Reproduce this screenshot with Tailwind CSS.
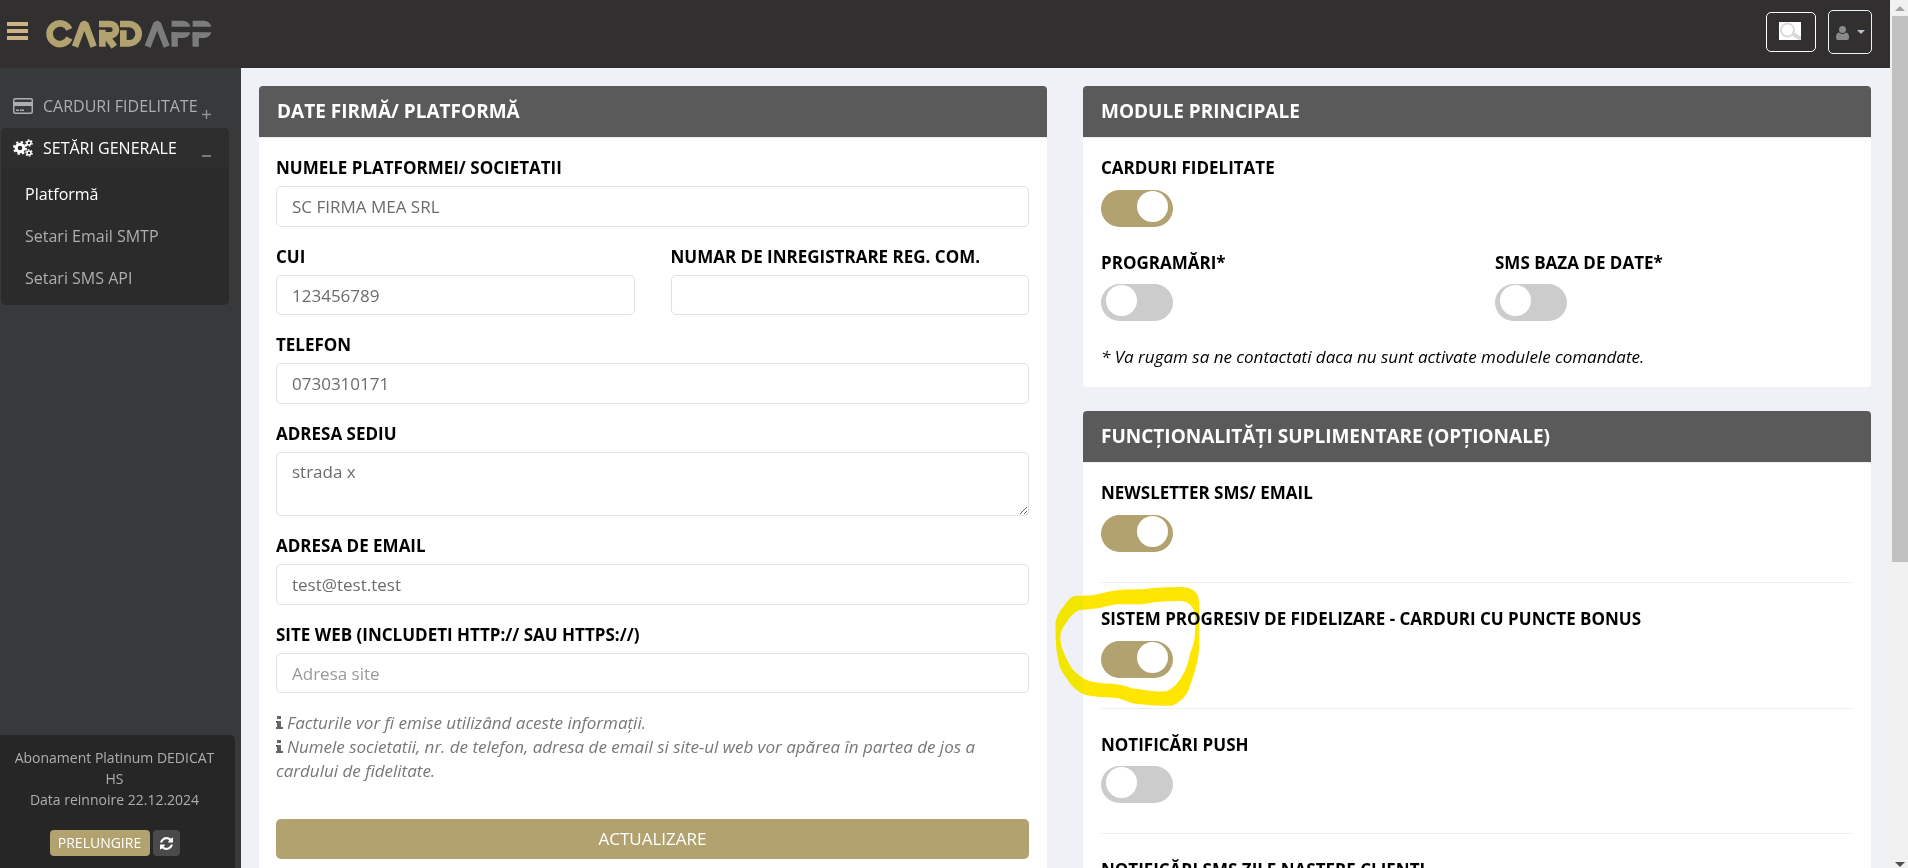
<!DOCTYPE html>
<html lang="ro">
<head>
<meta charset="utf-8">
<title>CardApp - Platformă</title>
<script src="https://cdn.jsdelivr.net/npm/@tailwindcss/browser@4"></script>
</head>
<body class="flex h-screen overflow-hidden bg-[#f0f1f7] font-['Open_Sans','Noto_Sans',sans-serif] text-base leading-6 text-black">
<div class="flex min-w-0 flex-1 flex-col">
  <header class="flex h-[68px] shrink-0 items-center bg-[#322f30] pr-[18px]">
    <button aria-label="Meniu" class="mb-[6px] ml-[7px] flex w-[21px] flex-col gap-[3px]">
      <span class="h-1 bg-[#cfb284]"></span><span class="h-1 bg-[#cfb284]"></span><span class="h-1 bg-[#cfb284]"></span>
    </button>
    <a href="#" aria-label="CardApp" class="ml-[17px]">
      <svg class="h-8 w-[168px]" viewBox="135 55 504 96" fill="none" stroke-width="20">
        <g stroke="#b1a26f">
          <path d="M208 89A31 31 0 1 0 208 115"/>
          <path d="M225 141L250 73H256L281 141" stroke-linejoin="bevel"/>
          <path d="M297 73H331A15 15 0 0 1 331 107H318L343 141M307 90V141"/>
          <path d="M360 73H387A29 29 0 0 1 387 131H370V92"/>
        </g>
        <g stroke="#7c7c7c" stroke-width="19">
          <path d="M443 141L469 73H474L500 141" stroke-linejoin="bevel"/>
          <path d="M524 141V98M587 141V98"/>
        </g>
        <g fill="#7c7c7c">
          <path d="M515 63H549Q567 64 571 81H515ZM578 63H612Q630 64 634 81H578Z"/>
          <path d="M515 98H571Q567 114 549 115H515ZM578 98H634Q630 114 612 115H578Z"/>
        </g>
      </svg>
    </a>
    <button aria-label="Caută" class="mb-1 ml-auto flex h-10 w-[50px] items-center justify-center rounded-[5px] border border-white">
      <svg class="mr-[2px] mb-[2px] h-[18px] w-[22px] bg-white" viewBox="0 0 22 18" fill="none" stroke="#d9d9d9"><circle cx="8.500" cy="8" r="6.500" stroke-width="2"/><path d="M14 12L22 17" stroke-width="4"/></svg>
    </button>
    <button aria-label="Cont" class="mb-1 ml-3 flex h-11 w-11 items-center justify-center gap-2 rounded-[5px] border border-[#eef0f7]">
      <svg class="mt-[2px] h-[14px] w-[13px]" viewBox="0 0 13 14" fill="#8a8a8a"><circle cx="6.500" cy="3.500" r="3.500"/><path d="M3 6.500Q6.500 9.500 10 6.500Q13 7 13 11.500Q13 14 11 14H2Q0 14 0 11.500Q0 7 3 6.500Z"/></svg>
      <svg class="h-1 w-2" viewBox="0 0 8 4" fill="#b9bdc9"><path d="M0 0H8L4 4Z"/></svg>
    </button>
  </header>

  <div class="flex min-h-0 flex-1">
    <aside class="flex w-[241px] shrink-0 flex-col justify-between bg-[#38393a] text-[#acaeb0]">
      <nav class="pl-px pr-3 pt-[18px]">
        <a href="#" class="mb-[2px] flex h-10 items-center pl-3 pr-[18px]">
          <svg class="h-4 w-5" viewBox="0 0 20 16" fill="#acaeb0"><rect x=".75" y=".75" width="18.500" height="14.500" rx="1.500" fill="none" stroke="#acaeb0" stroke-width="1.500"/><path d="M1 4H19V8H1ZM3 11.500H6V13H3ZM7 11.500H11V13H7Z"/></svg>
          <span class="ml-[10px]">CARDURI FIDELITATE</span>
          <svg class="ml-auto mt-4 size-[9px]" viewBox="0 0 9 9" stroke="#8f9192" stroke-width="1.500"><path d="M0 4.500H9M4.500 0V9"/></svg>
        </a>
        <div class="overflow-hidden rounded-[5px] bg-[#2b2b2b]">
          <a href="#" class="flex h-[39px] items-center bg-[#2e2e2e] pl-3 pr-[18px] text-white">
            <svg class="h-[18px] w-5" viewBox="0 0 20 18" fill="none" stroke="#fff">
              <circle cx="7" cy="9" r="3.800" stroke-width="3"/><circle cx="7" cy="9" r="6" stroke-width="2" stroke-dasharray="2.350 2.360"/>
              <circle cx="16" cy="4" r="2" stroke-width="1.600"/><circle cx="16" cy="4" r="3.200" stroke-width="1.200" stroke-dasharray="1.670 1.680"/>
              <circle cx="16" cy="14" r="2" stroke-width="1.600"/><circle cx="16" cy="14" r="3.200" stroke-width="1.200" stroke-dasharray="1.670 1.680"/>
            </svg>
            <span class="ml-[10px]">SETĂRI GENERALE</span>
            <span class="ml-auto mt-4 h-[2px] w-[9px] bg-[#7b7b7b]"></span>
          </a>
          <ul class="flex flex-col gap-[18px] px-6 pb-[15px] pt-[15px]">
            <li><a href="#" class="text-white">Platformă</a></li>
            <li><a href="#">Setari Email SMTP</a></li>
            <li><a href="#">Setari SMS API</a></li>
          </ul>
        </div>
      </nav>
      <section class="mr-[6px] rounded-tr-[5px] bg-[#262626] pt-3 pr-4 pb-3 pl-[10px] text-center text-sm leading-[21px]">
        <p>Abonament Platinum DEDICAT HS<br>Data reinnoire 22.12.2024</p>
        <div class="mt-5 flex justify-center gap-[3px]">
          <button class="h-[26px] w-[100px] rounded bg-[#b1a26f] text-sm text-white">PRELUNGIRE</button>
          <button aria-label="Reîncarcă" class="flex h-[26px] w-[27px] items-center justify-center rounded bg-[#4a4a4a]">
            <svg class="size-[13px]" viewBox="0 0 1536 1536" fill="#fff"><path d="M1511 928q0 5-1 7-64 268-268 434.500T764 1536q-146 0-282.500-55T238 1324l-129 129q-19 19-45 19t-45-19-19-45V960q0-26 19-45t45-19h448q26 0 45 19t19 45-19 45l-137 137q71 66 161 102t187 36q134 0 250-65t186-179q11-17 53-117 8-23 30-23h192q13 0 22.500 9.500t9.500 22.500zm25-800v448q0 26-19 45t-45 19h-448q-26 0-45-19t-19-45 19-45l138-138Q969 256 768 256q-134 0-250 65T332 500q-11 17-53 117-8 23-30 23H50q-13 0-22.500-9.500T18 608v-7q65-268 270-434.500T768 0q146 0 284 55.500T1297 212l130-129q19-19 45-19t45 19 19 45z"/></svg>
          </button>
        </div>
      </section>
    </aside>

    <main class="grid min-w-0 flex-1 grid-cols-2 items-start gap-9 pt-[18px] pr-[19px] pl-[18px] text-[17px] leading-6">
      <section class="overflow-hidden rounded-[4px] bg-white">
        <h2 class="h-[51px] bg-[#5a5a5a] px-[18px] text-[19px] leading-[51px] font-bold text-white">DATE FIRMĂ/ PLATFORMĂ</h2>
        <form class="flex flex-col gap-[18px] border-t border-[#eee] pt-[18px] pr-[18px] pb-[18px] pl-[17px]">
          <div class="flex flex-col gap-[6px]">
            <label for="name" class="font-bold">NUMELE PLATFORMEI/ SOCIETATII</label>
            <input id="name" value="SC FIRMA MEA SRL" class="h-[41px] w-full rounded-[5px] border border-[#e1e1e1] px-[15px] text-[#6c6c6c]">
          </div>
          <div class="grid grid-cols-2 gap-9">
            <div class="flex flex-col gap-[6px]">
              <label for="cui" class="font-bold">CUI</label>
              <input id="cui" value="123456789" class="h-10 w-full rounded-[5px] border border-[#e1e1e1] px-[15px] text-[#6c6c6c]">
            </div>
            <div class="flex flex-col gap-[6px]">
              <label for="reg" class="font-bold">NUMAR DE INREGISTRARE REG. COM.</label>
              <input id="reg" class="h-10 w-full rounded-[5px] border border-[#e1e1e1] px-[15px] text-[#6c6c6c]">
            </div>
          </div>
          <div class="flex flex-col gap-[6px]">
            <label for="tel" class="font-bold">TELEFON</label>
            <input id="tel" value="0730310171" class="h-[41px] w-full rounded-[5px] border border-[#e1e1e1] px-[15px] text-[#6c6c6c]">
          </div>
          <div class="flex flex-col gap-[6px]">
            <label for="adr" class="font-bold">ADRESA SEDIU</label>
            <textarea id="adr" class="h-16 w-full rounded-[5px] border border-[#e1e1e1] px-[15px] py-[7px] text-[#6c6c6c]">strada x</textarea>
          </div>
          <div class="flex flex-col gap-[6px]">
            <label for="mail" class="font-bold">ADRESA DE EMAIL</label>
            <input id="mail" value="test@test.test" class="h-[41px] w-full rounded-[5px] border border-[#e1e1e1] px-[15px] text-[#6c6c6c]">
          </div>
          <div class="flex flex-col gap-[6px]">
            <label for="site" class="font-bold">SITE WEB (INCLUDETI HTTP:// SAU HTTPS://)</label>
            <input id="site" placeholder="Adresa site" class="h-10 w-full rounded-[5px] border border-[#e1e1e1] px-[15px] placeholder:text-[#999]">
          </div>
          <div class="text-[#777] italic">
            <p><svg class="mr-1 mb-[3px] inline h-[13px] w-[7px]" viewBox="0 0 7 13" fill="#666"><path d="M1 0H5V3H1ZM0 5H5V11H7V13H0V11H1V7H0Z"/></svg>Facturile vor fi emise utilizând aceste informații.</p>
            <p><svg class="mr-1 mb-[3px] inline h-[13px] w-[7px]" viewBox="0 0 7 13" fill="#666"><path d="M1 0H5V3H1ZM0 5H5V11H7V13H0V11H1V7H0Z"/></svg>Numele societatii, nr. de telefon, adresa de email si site-ul web vor apărea în partea de jos a cardului de fidelitate.</p>
          </div>
          <button type="button" class="mt-[18px] h-10 rounded-[5px] bg-[#b1a26f] text-white">ACTUALIZARE</button>
        </form>
      </section>

      <div class="flex min-w-0 flex-col gap-6">
        <section class="overflow-hidden rounded-[4px] bg-white">
          <h2 class="h-[51px] bg-[#5a5a5a] px-[18px] text-[19px] leading-[51px] font-bold text-white">MODULE PRINCIPALE</h2>
          <div class="border-t border-[#eee] p-[18px]">
            <div class="flex flex-col items-start gap-[10px]">
              <label for="m1" class="font-bold">CARDURI FIDELITATE</label>
              <input id="m1" type="checkbox" checked class="flex h-[37px] w-[72px] appearance-none rounded-full bg-[#ccc] pl-[5px] pt-px before:size-[31px] before:rounded-full before:bg-white checked:bg-[#b1a26f] checked:pl-9">
            </div>
            <div class="mt-6 grid grid-cols-2 gap-9">
              <div class="flex flex-col items-start gap-[9px]">
                <label for="m2" class="font-bold">PROGRAMĂRI*</label>
                <input id="m2" type="checkbox" class="flex h-[37px] w-[72px] appearance-none rounded-full bg-[#ccc] pl-[5px] pt-px before:size-[31px] before:rounded-full before:bg-white checked:bg-[#b1a26f] checked:pl-9">
              </div>
              <div class="flex flex-col items-start gap-[9px]">
                <label for="m3" class="font-bold">SMS BAZA DE DATE*</label>
                <input id="m3" type="checkbox" class="flex h-[37px] w-[72px] appearance-none rounded-full bg-[#ccc] pl-[5px] pt-px before:size-[31px] before:rounded-full before:bg-white checked:bg-[#b1a26f] checked:pl-9">
              </div>
            </div>
            <p class="mt-6 italic">* Va rugam sa ne contactati daca nu sunt activate modulele comandate.</p>
          </div>
        </section>

        <section class="rounded-[4px] bg-white">
          <h2 class="h-[51px] rounded-t-[4px] bg-[#5a5a5a] px-[18px] text-[19px] leading-[51px] font-bold text-white">FUNCȚIONALITĂȚI SUPLIMENTARE (OPȚIONALE)</h2>
          <div class="border-t border-[#eee] p-[18px]">
            <div class="flex flex-col items-start gap-[10px] pb-[30px]">
              <label for="f1" class="font-bold">NEWSLETTER SMS/ EMAIL</label>
              <input id="f1" type="checkbox" checked class="flex h-[37px] w-[72px] appearance-none rounded-full bg-[#ccc] pl-[5px] pt-px before:size-[31px] before:rounded-full before:bg-white checked:bg-[#b1a26f] checked:pl-9">
            </div>
            <div class="relative flex flex-col items-start gap-[10px] border-t border-[#eee] pb-[30px] pt-6">
              <label for="f2" class="font-bold">SISTEM PROGRESIV DE FIDELIZARE - CARDURI CU PUNCTE BONUS</label>
              <input id="f2" type="checkbox" checked class="flex h-[37px] w-[72px] appearance-none rounded-full bg-[#ccc] pl-[5px] pt-px before:size-[31px] before:rounded-full before:bg-white checked:bg-[#b1a26f] checked:pl-9">
              <!-- highlighter ring around the bonus-points switch -->
              <svg class="pointer-events-none absolute top-[2px] -left-12 h-[123px] w-[151px] mix-blend-darken" viewBox="55 75 370 370" preserveAspectRatio="none" fill="#ffe600" fill-rule="evenodd"><path d="M112 107C120 107 140 107 155 105L180 98C210 88 250 87 275 88C300 83 340 81 370 81C400 82 413 100 413 130C414 180 414 230 413 265C410 320 395 360 387 392C378 415 360 432 345 438C320 440 280 436 250 431L215 416C190 412 150 414 130 404C110 392 95 372 90 358C75 335 70 320 68 300C62 270 61 240 61 190C65 160 75 150 85 132C95 115 103 107 112 107ZM125 150L165 145C185 140 200 134 215 133L275 133C300 125 340 123 370 123C392 127 402 145 403 170C406 230 400 255 390 285C385 325 370 355 357 374C345 385 340 395 325 395C290 395 265 387 250 386C230 378 218 373 200 372C180 371 155 371 130 357C115 342 105 335 97 317C85 290 72 260 73 228C75 205 90 185 97 172C107 158 115 150 125 150Z"/></svg>
            </div>
            <div class="flex flex-col items-start gap-[9px] border-t border-[#eee] pb-[30px] pt-6">
              <label for="f3" class="font-bold">NOTIFICĂRI PUSH</label>
              <input id="f3" type="checkbox" class="flex h-[37px] w-[72px] appearance-none rounded-full bg-[#ccc] pl-[5px] pt-px before:size-[31px] before:rounded-full before:bg-white checked:bg-[#b1a26f] checked:pl-9">
            </div>
            <div class="flex flex-col items-start gap-[10px] border-t border-[#eee] pt-6">
              <label for="f4" class="font-bold">NOTIFICĂRI SMS ZILE NAȘTERE CLIENȚI</label>
              <input id="f4" type="checkbox" class="flex h-[37px] w-[72px] appearance-none rounded-full bg-[#ccc] pl-[5px] pt-px before:size-[31px] before:rounded-full before:bg-white checked:bg-[#b1a26f] checked:pl-9">
            </div>
          </div>
        </section>
      </div>
    </main>
  </div>
</div>
<!-- scrollbar -->
<div class="flex w-[18px] shrink-0 flex-col bg-[#f1f1f1] pl-[2px]" aria-hidden="true">
  <div class="flex h-4 shrink-0 items-center justify-center"><svg class="h-[5px] w-[10px]" viewBox="0 0 10 5" fill="#a3a3a3"><path d="M5 0L10 5H0Z"/></svg></div>
  <div class="flex-1"><div class="h-[65%] bg-[#c1c1c1]"></div></div>
  <div class="flex h-3 shrink-0 items-end justify-center pb-[1px]"><svg class="h-[5px] w-[10px]" viewBox="0 0 10 5" fill="#505050"><path d="M0 0H10L5 5Z"/></svg></div>
</div>
</body>
</html>
